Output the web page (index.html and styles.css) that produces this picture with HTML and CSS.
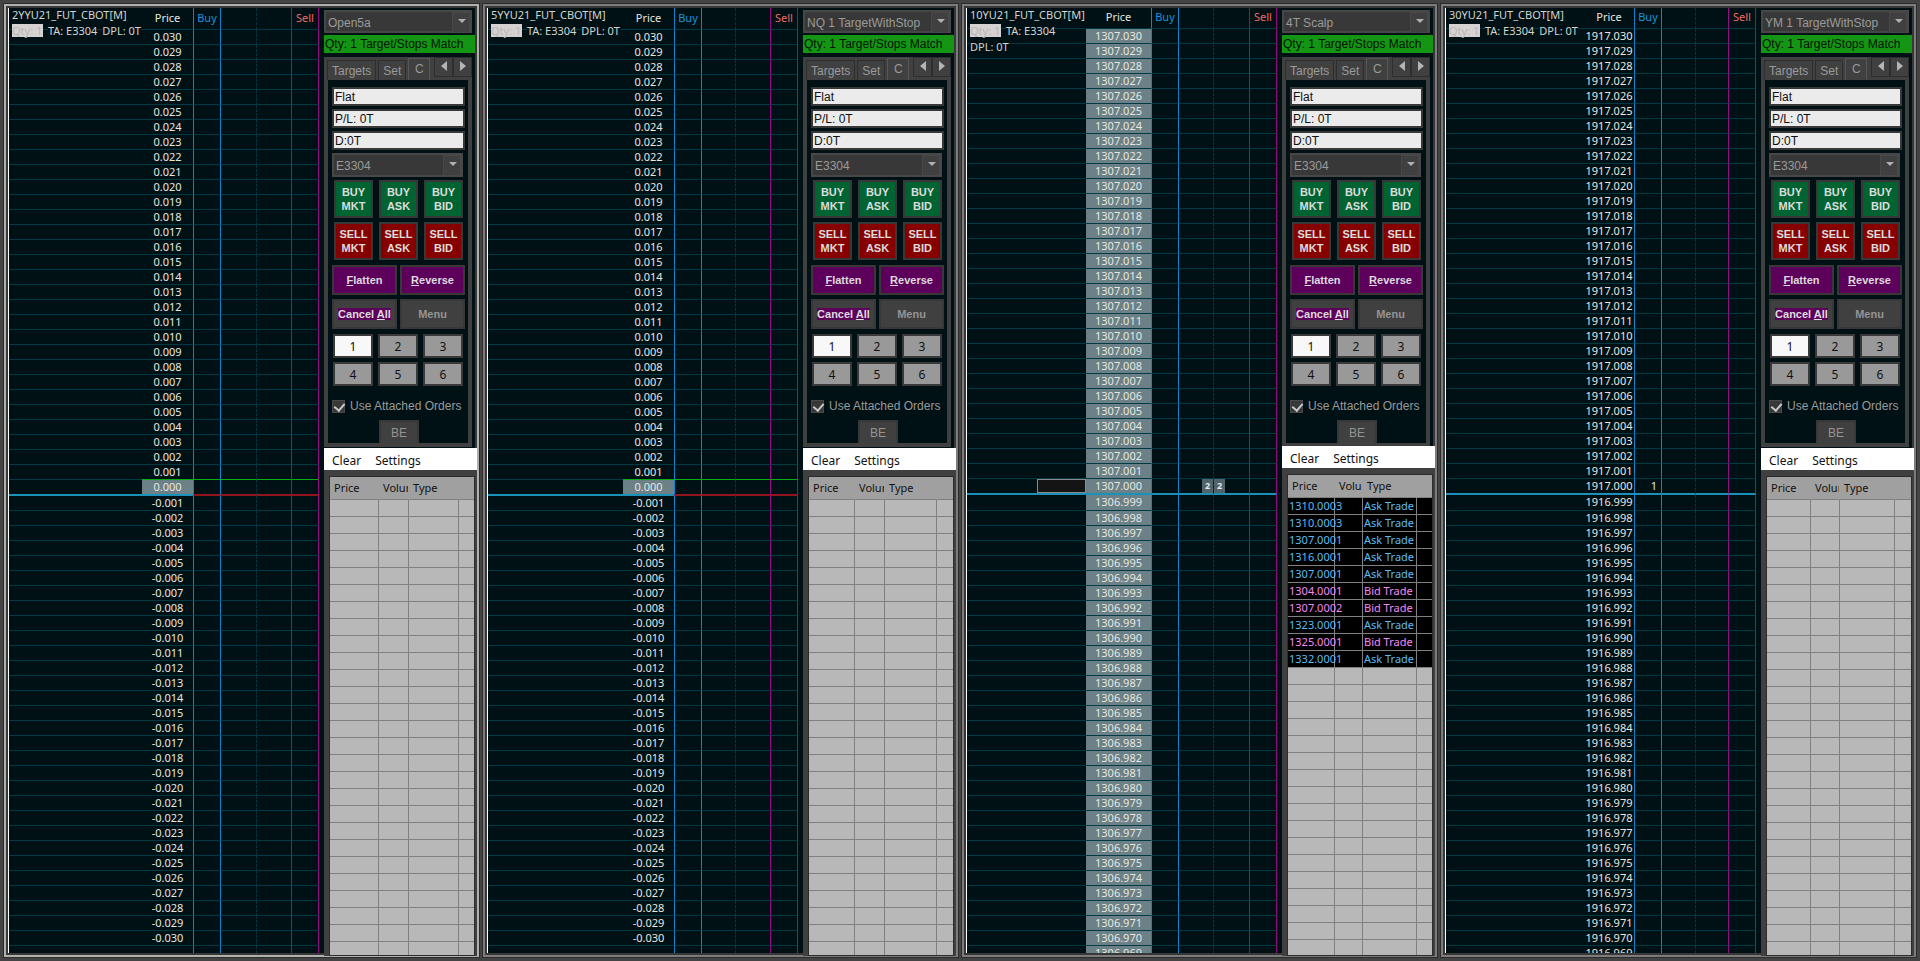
FILE: index.html
```html
<!DOCTYPE html>
<html lang="en">
<head>
    <meta charset="UTF-8">
    <meta name="viewport" content="width=device-width, initial-scale=1.0">
    <title>Trading DOM</title>
    <link rel="stylesheet" href="styles.css">
</head>
<body>
    <main class="workspace" id="workspace"></main>

    <script>
        const LEVELS = 30;
        const LIST_ROWS = 27;

        const panels = [
            {
                symbol: '2YYU21_FUT_CBOT[M]', config: 'Open5a', mid: 0, theme: 'active zero',
                cols: [51, 27, 36, 35, 28], listCols: [49, 30, 50]
            },
            {
                symbol: '5YYU21_FUT_CBOT[M]', config: 'NQ 1 TargetWithStop', mid: 0, theme: 'zero',
                cols: [51, 27, 34, 35, 28], listCols: [46, 30, 52]
            },
            {
                symbol: '10YU21_FUT_CBOT[M]', config: '4T Scalp', mid: 1307, theme: 'shaded tight',
                cols: [65, 27, 35, 36, 28], listCols: [47, 28, 54], bid: 2, ask: 2, box: true,
                trades: [
                    ['1310.000', 3, 'Ask'], ['1310.000', 3, 'Ask'], ['1307.000', 1, 'Ask'],
                    ['1316.000', 1, 'Ask'], ['1307.000', 1, 'Ask'], ['1304.000', 1, 'Bid'],
                    ['1307.000', 2, 'Bid'], ['1323.000', 1, 'Ask'], ['1325.000', 1, 'Bid'],
                    ['1332.000', 1, 'Ask']
                ]
            },
            {
                symbol: '30YU21_FUT_CBOT[M]', config: 'YM 1 TargetWithStop', mid: 1917, theme: '',
                cols: [50, 27, 34, 33, 28], listCols: [44, 29, 55], buy: 1
            }
        ];

        function ladderRow(p, i) {
            const price = (p.mid - i / 1000).toFixed(3);
            const last = i === 0;
            let cls = '';
            if (i === -1) cls = 'above-last';
            if (last) cls = 'last';
            if (i > LEVELS) cls = 'tail';
            const text = cls === 'tail' && p.mid === 0 ? '' : price;
            return `<tr class="${cls}">
                <td>${last && p.box ? '<div class="order-box"></div>' : ''}</td>
                <td class="price"><div>${text}</div></td>
                <td class="buy">${last && p.buy ? p.buy : ''}</td>
                <td class="bid">${last && p.bid ? `<span class="size">${p.bid}</span>` : ''}</td>
                <td class="ask">${last && p.ask ? `<span class="size">${p.ask}</span>` : ''}</td>
                <td class="sell"></td>
            </tr>`;
        }

        function ladder(p) {
            let rows = '';
            for (let i = -LEVELS; i <= LEVELS + 1; i++) rows += ladderRow(p, i);
            return `<table class="ladder">
                <colgroup><col>${p.cols.map(w => `<col style="width:${w}px">`).join('')}</colgroup>
                <thead><tr>
                    <th class="info-cell">
                        <div class="info">
                            <div><span>${p.symbol}</span></div>
                            <span class="qty">Qty: 1</span>
                            <span>TA: E3304</span>
                            <span>DPL: 0T</span>
                        </div>
                    </th>
                    <th>Price</th>
                    <th class="buy">Buy</th>
                    <th class="bid"></th>
                    <th class="ask"></th>
                    <th class="sell">Sell</th>
                </tr></thead>
                <tbody>${rows}</tbody>
            </table>`;
        }

        function orderButtons(side) {
            return ['MKT', 'ASK', 'BID'].map(t =>
                `<button class="btn ${side.toLowerCase()}-btn">${side}<br>${t}</button>`).join('');
        }

        function controls(p, n) {
            return `<div class="combo">
                    <select aria-label="Trade window config"><option>${p.config}</option></select>
                </div>
                <div class="status">Qty: 1 Target/Stops Match</div>
                <div class="tabs">
                    <button class="tab">Targets</button>
                    <button class="tab">Set</button>
                    <button class="tab current">C</button>
                    <div class="arrows">
                        <button class="arrow" aria-label="Previous tab"><svg width="6" height="10"><path d="M6 0v10L0 5z"/></svg></button>
                        <button class="arrow" aria-label="Next tab"><svg width="6" height="10"><path d="M0 0v10l6-5z"/></svg></button>
                    </div>
                </div>
                <div class="tab-page">
                    <input class="field" type="text" aria-label="Position" value="Flat">
                    <input class="field" type="text" aria-label="Profit and loss" value="P/L: 0T">
                    <input class="field" type="text" aria-label="Daily" value="D:0T">
                    <div class="combo account">
                        <select aria-label="Account"><option>E3304</option></select>
                    </div>
                    <div class="row">${orderButtons('BUY')}</div>
                    <div class="row">${orderButtons('SELL')}</div>
                    <div class="actions">
                        <button class="btn purple"><u>F</u>latten</button>
                        <button class="btn purple"><u>R</u>everse</button>
                        <button class="btn"><span class="mark">Cancel <u>A</u>ll</span></button>
                        <button class="btn muted">Menu</button>
                    </div>
                    <div class="numbers">
                        ${[1, 2, 3, 4, 5, 6].map(k => `<button class="num${k === 1 ? ' on' : ''}">${k}</button>`).join('')}
                    </div>
                    <div class="attach">
                        <input type="checkbox" id="attach${n}" checked>
                        <label for="attach${n}">Use Attached Orders</label>
                    </div>
                    <button class="be">BE</button>
                </div>`;
        }

        function tradeList(p) {
            let rows = '';
            for (let i = 0; i < LIST_ROWS; i++) {
                const t = p.trades && p.trades[i];
                rows += t
                    ? `<tr class="${t[2].toLowerCase()}-trade"><td>${t[0]}</td><td>${t[1]}</td><td>${t[2]} Trade</td><td></td></tr>`
                    : '<tr><td></td><td></td><td></td><td></td></tr>';
            }
            return `<div class="list">
                <div class="menubar"><button>Clear</button><button>Settings</button></div>
                <div class="list-body">
                    <table class="trades">
                        <colgroup>${p.listCols.map(w => `<col style="width:${w}px">`).join('')}<col></colgroup>
                        <thead><tr><th>Price</th><th>Volume</th><th>Type</th><th></th></tr></thead>
                        <tbody>${rows}</tbody>
                    </table>
                </div>
            </div>`;
        }

        document.getElementById('workspace').innerHTML = panels.map((p, n) => `
            <section class="panel ${p.theme}">
                <div class="ladder-wrap">${ladder(p)}</div>
                <div class="side">
                    ${controls(p, n)}
                    ${tradeList(p)}
                </div>
            </section>`).join('');
    </script>
</body>
</html>
```
FILE: styles.css
```css
* {
    box-sizing: border-box;
}

body {
    margin: 0;
    background: #444;
    color: #e8e8e0;
    font-family: "Noto Sans", "Open Sans", sans-serif;
    font-size: 11px;
}

button, input, select {
    font-family: "Liberation Sans", Arial, sans-serif;
    font-size: 12px;
    margin: 0;
    padding: 0;
}

.workspace {
    display: grid;
    grid-template-columns: repeat(4, 1fr);
    gap: 4px;
    min-height: 100vh;
    padding: 4px;
}

.panel {
    display: grid;
    grid-template-columns: 1fr 151px;
    border: 2px solid #7d7b7b;
    background: #001115;
    outline: 1px solid #2c2c2c;
    box-shadow: inset 0 0 0 2px #383838;
    padding: 2px;
}

.panel.active {
    border-color: #b0b0ac;
}

/* price ladder */

.ladder-wrap {
    padding-right: 5px;
    border-left: 1px solid #fff;
}

.ladder {
    width: 100%;
    height: 100%;
    table-layout: fixed;
    border-collapse: separate;
    border-spacing: 0;
    line-height: 14px;
}

.ladder th {
    height: 21px;
    padding: 0 0 2px;
    font-weight: normal;
    border-bottom: 1px solid #003a44;
}

.zero .ladder th {
    height: 22px;
}

.ladder td {
    height: 15px;
    padding: 0;
    border-bottom: 1px solid #003a44;
    text-align: center;
    white-space: nowrap;
}

.ladder .buy,
.ladder .bid {
    border-left: 1px solid #0b86cc;
}

.ladder .ask {
    border-left: 1px dashed #08343e;
}

.ladder .sell {
    border-left: 1px solid #980a80;
    border-right: 1px solid #980a80;
}

.ladder th.buy {
    color: #1494dc;
}

.ladder th.sell {
    color: #f26a62;
}

.ladder .last td {
    height: 16px;
    border-bottom: 2px solid #1b90b8;
}

.ladder .last .buy {
    text-align: right;
    padding-right: 4px;
}

.ladder .tail td {
    height: 7px;
    border-bottom: 0;
}

.tail .price div {
    height: 7px;
    overflow: hidden;
}

.zero .last .price,
.shaded .ladder td.price {
    background: #6b8087;
}

.zero .ladder .above-last td:not(:first-child) {
    border-bottom-color: #0cac14;
}

.zero .ladder .last .price ~ td {
    border-bottom-color: #92141c;
}

.info-cell {
    position: relative;
    text-align: left;
}

.info {
    position: absolute;
    top: -1px;
    left: 0;
    width: calc(100% + 4px);
    padding-left: 3px;
    line-height: 16px;
    color: #d4d4d0;
}

.info span {
    display: inline-block;
    height: 14px;
    margin-right: 2px;
    line-height: 14px;
    background: #001115;
    white-space: nowrap;
}

.info .qty {
    width: 31px;
    height: 13px;
    line-height: 13px;
    background: #d6d2d2;
    color: #bab6b6;
}

.order-box {
    width: 49px;
    height: 14px;
    margin-left: auto;
    border: 1px solid #8a8a8a;
    background: #141414;
}

.size {
    display: block;
    width: 11px;
    height: 14px;
    background: #4f646b;
    color: #e8e8e8;
    font-size: 9px;
    font-weight: bold;
    line-height: 13px;
}

.bid .size {
    margin-left: auto;
}

/* control panel */

.side {
    display: flex;
    flex-direction: column;
    padding-top: 2px;
    font-family: "Liberation Sans", Arial, sans-serif;
    font-size: 12px;
}

.combo {
    position: relative;
    width: 148px;
    height: 23px;
    border: 2px solid #474747;
    background: #383838;
}

.combo select {
    width: 100%;
    height: 100%;
    padding: 2px 18px 0 2px;
    appearance: none;
    border: 0;
    background: none;
    color: #9a9a9a;
}

.combo::before {
    content: '';
    position: absolute;
    top: 0;
    right: 0;
    width: 16px;
    height: 19px;
    border: 1px solid #484848;
    background: #404040;
}

.combo::after {
    content: '';
    position: absolute;
    top: 7px;
    right: 4px;
    border: 4px solid transparent;
    border-top-color: #b0b0b0;
    border-bottom: 0;
}

.status {
    width: 151px;
    height: 18px;
    margin-top: 2px;
    background: #149614;
    color: #001400;
    line-height: 18px;
    padding-left: 1px;
    white-space: nowrap;
}

.tabs {
    display: flex;
    align-items: flex-end;
    gap: 2px;
    width: 148px;
    height: 23px;
    margin-top: 4px;
    padding-left: 3px;
    background: #404040;
}

.tab {
    height: 20px;
    padding: 1px 4px 0;
    border: 1px solid #2e2e2e;
    border-bottom: 0;
    background: #404040;
    color: #9a9a9a;
}

.tab.current {
    width: 22px;
    height: 22px;
    padding-bottom: 3px;
    border-color: #565656;
}

.arrows {
    display: flex;
    align-self: flex-start;
    margin-left: auto;
}

.arrow {
    width: 19px;
    height: 20px;
    border: 1px solid #2e2e2e;
    background: #404040;
}

.arrow path {
    fill: #b4b4b4;
}

.tab-page {
    display: flex;
    flex-direction: column;
    width: 148px;
    padding: 7px 3px 0 4px;
    border: 4px solid #404040;
    border-top: 0;
}

.field {
    width: 133px;
    height: 19px;
    margin-bottom: 3px;
    border: 2px solid #383838;
    background: #ebebeb;
    color: #111;
    padding-left: 1px;
    padding-top: 1px;
}

.account {
    width: 131px;
    height: 24px;
}

.row {
    display: flex;
    gap: 6px;
    padding: 3px 0 1px 2px;
}

.btn {
    border: 2px solid #383838;
    background: #404040;
    color: #dcdcdc;
    font-size: 11px;
    font-weight: bold;
    line-height: 14px;
    white-space: nowrap;
}

.row .btn {
    width: 39px;
    height: 38px;
}

.buy-btn {
    background: #006432;
}

.sell-btn {
    background: #860000;
}

.purple {
    background: #5c005c;
}

.muted {
    color: #949494;
}

.mark {
    background: #5c005c;
}

.actions {
    display: grid;
    grid-template-columns: 65px 65px;
    grid-auto-rows: 30px;
    gap: 4px 3px;
    margin-top: 4px;
}

.numbers {
    display: grid;
    grid-template-columns: repeat(3, 40px);
    grid-auto-rows: 24px;
    gap: 4px 5px;
    margin-top: 5px;
    padding-left: 1px;
}

.num {
    border: 2px solid #3a3838;
    background: #999;
    color: #111;
    font-family: "Noto Sans", sans-serif;
}

.num.on {
    background: #f8f8f8;
}

.attach {
    display: flex;
    align-items: center;
    gap: 5px;
    height: 14px;
    margin-top: 13px;
    color: #9a9a9a;
    white-space: nowrap;
}

.attach input {
    width: 13px;
    height: 13px;
    appearance: none;
    border: 1px solid #4a4a4a;
    background: #383838;
    position: relative;
}

.attach input:checked::after {
    content: '';
    position: absolute;
    top: 0;
    left: 3px;
    width: 5px;
    height: 8px;
    border: solid #c8c8c8;
    border-width: 0 2px 2px 0;
    transform: rotate(40deg);
}

.be {
    width: 40px;
    height: 23px;
    margin: 7px 0 0 47px;
    border: 2px solid #383838;
    border-bottom: 0;
    background: #404040;
    color: #949494;
}

/* trade list */

.list {
    display: flex;
    flex: 1;
    flex-direction: column;
    width: 153px;
    margin: 1px 0 -3px;
    position: relative;
    background: #404040;
    font-family: "Noto Sans", "Open Sans", sans-serif;
}

.tight .list {
    margin-top: -1px;
}

.menubar {
    display: flex;
    gap: 14px;
    height: 22px;
    padding-left: 8px;
    background: #fff;
}

.menubar button {
    border: 0;
    background: none;
    color: #111;
    font-family: inherit;
    padding-top: 2px;
}

/* rows past the bottom edge are cut off */
.list-body {
    flex: 1 1 0;
    min-height: 0;
    margin: 6px 2px 0 5px;
    border: 1px solid #2c2c2c;
    overflow: hidden;
}

.trades {
    width: 100%;
    table-layout: fixed;
    border-collapse: separate;
    border-spacing: 0;
    font-size: 11px;
    line-height: 16px;
}

.trades tr {
    background: #b8b8b8;
}

.trades th,
.trades td {
    height: 17px;
    padding: 0 0 0 1px;
    border-right: 1px solid #808080;
    border-bottom: 1px solid #808080;
    text-align: left;
    white-space: nowrap;
}

.trades th:last-child,
.trades td:last-child {
    border-right: 0;
}

.trades th {
    height: 23px;
    padding-left: 4px;
    border-right-color: #a0a0a0;
    background: #a0a0a0;
    color: #111;
    font-weight: normal;
    overflow: hidden;
}

.trades .ask-trade,
.trades .bid-trade {
    background: #000;
    color: #5cbcf0;
}

.trades .bid-trade {
    color: #f58af0;
}
```
